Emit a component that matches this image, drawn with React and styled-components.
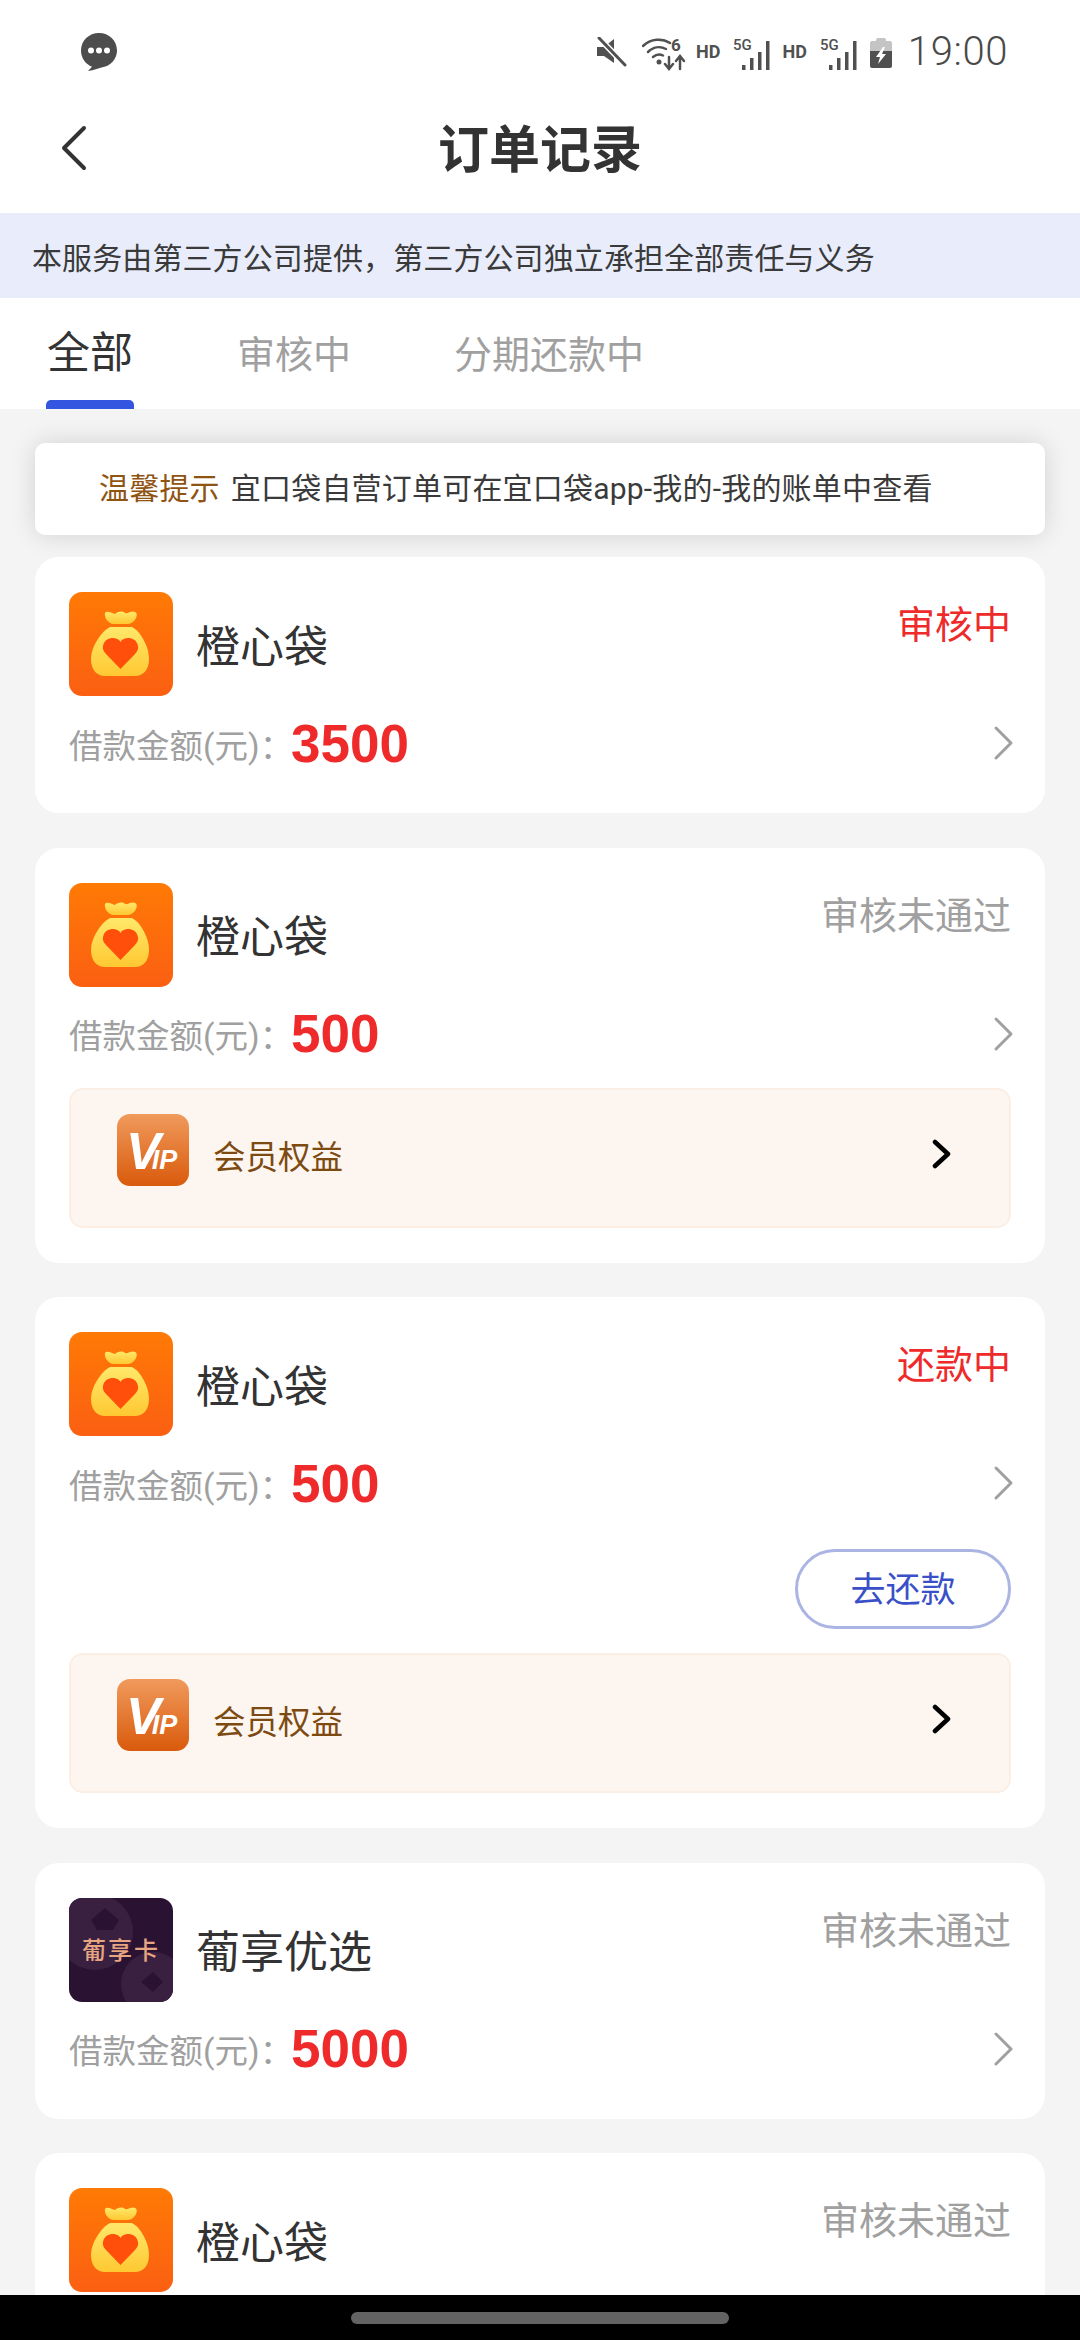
import React from 'react';
import styled, { createGlobalStyle } from 'styled-components';

const GlobalStyle = createGlobalStyle`
  html, body {
    margin: 0;
    padding: 0;
    background: #f4f4f4;
  }
  * {
    box-sizing: border-box;
  }
`

const Page = styled.div`
  width: 1080px;
  height: 2340px;
  display: flex;
  flex-direction: column;
  overflow: hidden;
  font-family: Roboto, "Noto Sans CJK SC", "Noto Sans", sans-serif;
  color: #333;
`

const StatusBar = styled.div`
  height: 100px;
  flex: none;
  display: flex;
  align-items: center;
  background: #fff;
  padding: 4px 72px 0 81px;
  color: #505050;
`

const StatusRight = styled.div`
  margin-left: auto;
  display: flex;
  align-items: center;
`

const MuteSlot = styled.div`
  display: flex;
  margin-right: 15px;
`

const BatterySlot = styled.div`
  display: flex;
  margin-left: 12px;
`

const Time = styled.span`
  font-family: Roboto, "Liberation Sans", sans-serif;
  font-weight: 300;
  font-size: 40px;
  line-height: 48px;
  letter-spacing: 0.6px;
  margin-left: 16px;
  color: #4a4a4a;
`

const TitleBar = styled.div`
  height: 113px;
  flex: none;
  background: #fff;
  display: flex;
  align-items: center;
  justify-content: center;
  position: relative;
  padding-bottom: 12px;
`

const BackButton = styled.div`
  position: absolute;
  left: 60px;
  top: 25px;
  display: flex;
`

const Title = styled.h1`
  margin: 0;
  font-size: 51px;
  line-height: 60px;
  font-weight: 700;
  color: #333;
`

const Notice = styled.div`
  height: 85px;
  flex: none;
  background: #e9edfb;
  padding-left: 32px;
  display: flex;
  align-items: center;
  font-size: 30px;
  letter-spacing: 0.1px;
  color: #3a3a3a;
`

const Tabs = styled.div`
  height: 111px;
  flex: none;
  background: #fff;
  display: flex;
  gap: 103px;
  padding-left: 46px;
`

const Tab = styled.div`
  display: flex;
  flex-direction: column;
  align-items: center;
  justify-content: space-between;
  padding-top: ${p => (p.$active ? 25 : 29)}px;
  font-size: ${p => (p.$active ? 43 : 38)}px;
  line-height: ${p => (p.$active ? 60 : 56)}px;
  color: ${p => (p.$active ? '#333' : '#a0a0a0')};
`

const TabLine = styled.div`
  width: 88px;
  height: 9px;
  border-radius: 5px 5px 0 0;
  background: #3355e0;
`

const List = styled.div`
  flex: 1;
  min-height: 0;
  overflow: hidden;
  background: #f4f4f4;
  padding: 34px 35px 0;
  display: flex;
  flex-direction: column;
`

const Tip = styled.div`
  height: 92px;
  flex: none;
  background: #fff;
  border-radius: 10px;
  box-shadow: 0 0 26px rgba(0, 0, 0, 0.14);
  display: flex;
  align-items: center;
  padding: 0 0 6px 64px;
  font-size: 30px;
  letter-spacing: 0.2px;
  color: #3a3a3a;
  margin-bottom: 22px;
`

const TipLabel = styled.span`
  color: #8f5412;
  margin-right: 11px;
`

const Card = styled.div`
  flex: none;
  display: flex;
  flex-direction: column;
  background: #fff;
  border-radius: 24px;
  padding: 35px 34px;
  margin-bottom: 34.5px;
`

const CardHead = styled.div`
  display: flex;
  height: 104px;
`

const AppIcon = styled.div`
  width: 104px;
  height: 104px;
  flex: none;
  display: flex;
  margin-right: 24px;
  position: relative;
`

const AppName = styled.div`
  align-self: center;
  font-size: 44px;
  line-height: 60px;
  padding-top: 7px;
  margin-left: -1px;
  color: #333;
`

const Status = styled.div`
  margin-left: auto;
  font-size: 38px;
  line-height: 56px;
  margin-top: 5px;
  color: ${p => (p.$alert ? '#ee2a2a' : '#a0a0a0')};
`

const AmountRow = styled.div`
  height: 60px;
  margin: 17px 0 5px;
  display: flex;
  align-items: center;
`

const AmountLabel = styled.span`
  font-size: 33.5px;
  color: #a0a0a0;
  width: 222px;
  flex: none;
  white-space: nowrap;
`

const Amount = styled.span`
  font-family: "Liberation Sans", Arial, sans-serif;
  font-weight: 700;
  font-size: 53px;
  color: #ee2a2a;
`

const RowChevron = styled.div`
  margin-left: auto;
  margin-right: -5px;
  display: flex;
`

const ButtonRow = styled.div`
  display: flex;
  justify-content: flex-end;
  margin: 31px 0 24px;
`

const RepayButton = styled.div`
  width: 216px;
  height: 80px;
  border: 3px solid #aab5e3;
  border-radius: 40px;
  display: flex;
  align-items: center;
  justify-content: center;
  padding-bottom: 5px;
  font-size: 35px;
  color: #3a50c8;
`

const Benefit = styled.div`
  height: 140px;
  margin-top: ${p => (p.$tight ? 0 : 19)}px;
  background: #fdf6f0;
  border: 2px solid #fbefe5;
  border-radius: 14px;
  display: flex;
  align-items: center;
  padding: 0 57px 8px 46px;
`

const BenefitIcon = styled.div`
  width: 72px;
  height: 72px;
  flex: none;
  display: flex;
  margin-right: 24px;
  margin-bottom: 8px;
`

const BenefitText = styled.span`
  font-size: 32.5px;
  padding-top: 1px;
  color: #7d4a12;
`

const BenefitChevron = styled.div`
  margin-left: auto;
  display: flex;
`

const BlackBar = styled.div`
  height: 45px;
  flex: none;
  background: #000;
  display: flex;
  align-items: center;
  justify-content: center;
`

const HomeIndicator = styled.div`
  width: 378px;
  height: 12px;
  border-radius: 6px;
  background: #636363;
`

const HdLabel = styled.span`
  font-family: Roboto, "Liberation Sans", sans-serif;
  font-weight: 700;
  font-size: 18px;
  line-height: 20px;
  color: #505050;
  margin: 0 ${p => p.$right}px 0 ${p => p.$left}px;
`

const PuxiangLabel = styled.span`
  position: absolute;
  left: 0;
  right: 0;
  top: 33px;
  text-align: center;
  font-family: "Noto Sans CJK SC", sans-serif;
  font-size: 24px;
  line-height: 36px;
  font-weight: 500;
  letter-spacing: 2px;
  color: #e8a582;
`

const ChatIcon = () => (
  <svg width="36" height="38" viewBox="0 0 36 38">
    <path d="M18 0C8 0 0 7.600 0 17.500c0 8 5 14 11 16.200L7 38c6-.5 10.500-3 13.500-3.500C29 33.500 36 26.500 36 17.500 36 7.600 28 0 18 0z" fill="#4d4d4d" />
    <circle cx="10" cy="17.500" r="3" fill="#fff" />
    <circle cx="18" cy="17.500" r="3" fill="#fff" />
    <circle cx="26" cy="17.500" r="3" fill="#fff" />
  </svg>
)

const MuteIcon = () => (
  <svg width="30" height="30" viewBox="0 0 30 30">
    <path d="M0 10h7l10-8v24L7 19H0z" fill="#505050" />
    <path d="M2 1l26 27" stroke="#fff" strokeWidth="6" />
    <path d="M2 1l26 27" stroke="#505050" strokeWidth="3" strokeLinecap="round" />
  </svg>
)

const WifiIcon = () => (
  <svg width="44" height="38" viewBox="0 -4 44 38">
    <g fill="none" stroke="#505050" strokeWidth="2.500" strokeLinecap="round">
      <path d="M1 9C9 1.500 20 1 28 6" />
      <path d="M6 15c5-5 12-6 18-3" />
      <path d="M11 20c3-2.500 7-3 10-1.500" />
      <path d="M27 20v11M23 27l4 5 4-5" />
      <path d="M38 32V20M34 24l4-5 4 5" />
    </g>
    <circle cx="17" cy="25" r="2.500" fill="#505050" />
    <text x="29" y="14" fontFamily="Roboto, Liberation Sans, sans-serif" fontWeight="700" fontSize="17" fill="#505050">6</text>
  </svg>
)

const SignalIcon = () => (
  <svg width="38" height="37" viewBox="0 -4 38 37">
    <text x="0" y="12" fontFamily="Roboto, Liberation Sans, sans-serif" fontWeight="500" fontSize="15" fill="#505050">5G</text>
    <g fill="#505050">
      <rect x="9" y="27" width="3.500" height="5" />
      <rect x="17" y="20" width="3.500" height="12" />
      <rect x="25" y="14" width="3.500" height="18" />
      <rect x="33" y="3" width="3.500" height="29" />
    </g>
  </svg>
)

const BatteryIcon = () => (
  <svg width="22" height="31" viewBox="0 0 22 31">
    <path d="M6 3a2 2 0 0 1 2-2h6a2 2 0 0 1 2 2v1h4a2 2 0 0 1 2 2v8H0V6a2 2 0 0 1 2-2h4z" fill="#c4c4c4" />
    <path d="M0 14h22v15a2 2 0 0 1-2 2H2a2 2 0 0 1-2-2z" fill="#505050" />
    <path d="M13 10l-7 10h4l-2 7 8-10h-4l3-7z" fill="#fff" />
  </svg>
)

const BackIcon = () => (
  <svg width="28" height="46" viewBox="0 0 28 46">
    <path d="M24 3L4 23l20 20" fill="none" stroke="#333" strokeWidth="4" strokeLinecap="round" strokeLinejoin="round" />
  </svg>
)

const GreyChevron = () => (
  <svg width="24" height="36" viewBox="0 0 24 36">
    <path d="M4 3l15 15L4 33" fill="none" stroke="#a0a0a0" strokeWidth="3" strokeLinecap="round" strokeLinejoin="round" />
  </svg>
)

const BlackChevron = () => (
  <svg width="20" height="30" viewBox="0 0 20 30">
    <path d="M3 3l13 12L3 27" fill="none" stroke="#000" strokeWidth="4.500" strokeLinecap="round" strokeLinejoin="round" />
  </svg>
)

const BagIcon = ({ id }) => (
  <svg width="104" height="104" viewBox="0 0 104 104">
    <defs>
      <linearGradient id={`bg-${id}`} x1="0" y1="0" x2="0" y2="1">
        <stop offset="0" stopColor="#ff7a05" />
        <stop offset="1" stopColor="#fb5f12" />
      </linearGradient>
      <linearGradient id={`bag-${id}`} x1="0" y1="0" x2="0" y2="1">
        <stop offset="0" stopColor="#ffe86a" />
        <stop offset="1" stopColor="#ffc832" />
      </linearGradient>
    </defs>
    <rect width="104" height="104" rx="13" fill={`url(#bg-${id})`} />
    <path d="M37 20c3-1 7 2 9 2 2-2 7-4 10-1 3 1 7-3 10-1 3 1 2 6-1 9-2 2-4 3-6 3H45c-3 0-6-2-8-5-1-3-2-6 0-7z" fill={`url(#bag-${id})`} />
    <path d="M41 35h22c8 4 17 19 17 32 0 11-6 17-14 17H36c-8 0-14-6-14-17 0-13 11-28 19-32z" fill={`url(#bag-${id})`} />
    <path d="M51.500 77L37 62c-3-3-3.500-6-3-8 1-6 6-8 10-8 3 0 6 1 7.500 4 1.500-3 4.500-4 7.500-4 4 0 9 2 10 8 .5 2 0 5-3 8z" fill="#ff4f0a" />
  </svg>
)

const PuxiangIcon = () => (
  <>
    <svg width="104" height="104" viewBox="0 0 104 104">
      <defs>
        <clipPath id="puxiang-clip">
          <rect width="104" height="104" rx="13" />
        </clipPath>
      </defs>
      <g clipPath="url(#puxiang-clip)">
        <rect width="104" height="104" fill="#2a1233" />
        <circle cx="26" cy="34" r="38" fill="#3a2040" />
        <circle cx="84" cy="86" r="32" fill="#3a2040" />
        <path d="M22 22l14-12 14 12-6 10H28z" fill="#2a1233" />
        <path d="M72 84l12-10 10 10-10 10z" fill="#2a1233" />
      </g>
    </svg>
    <PuxiangLabel>葡享卡</PuxiangLabel>
  </>
)

const VipIcon = ({ id }) => (
  <svg width="72" height="72" viewBox="0 0 72 72">
    <defs>
      <linearGradient id={`vip-${id}`} x1="0" y1="0" x2="0" y2="1">
        <stop offset="0" stopColor="#f09a5c" />
        <stop offset="1" stopColor="#d95a0c" />
      </linearGradient>
    </defs>
    <rect width="72" height="72" rx="13" fill={`url(#vip-${id})`} />
    <text x="9" y="55" fill="#fff" fontStyle="italic" fontWeight="700" fontFamily="Liberation Sans, sans-serif">
      <tspan fontSize="52">V</tspan>
      <tspan dx="-9" fontSize="27">IP</tspan>
    </text>
  </svg>
)

const NOTICE_TEXT = '本服务由第三方公司提供\uFF0C第三方公司独立承担全部责任与义务'
const AMOUNT_LABEL = '借款金额(元)\uFF1A'

// the last card runs under the nav bar, only its head is on screen
const orders = [
  { id: 1, app: 'bag', name: '橙心袋', status: '审核中', alert: true, amount: '3500' },
  { id: 2, app: 'bag', name: '橙心袋', status: '审核未通过', amount: '500', benefit: true },
  { id: 3, app: 'bag', name: '橙心袋', status: '还款中', alert: true, amount: '500', repay: true, benefit: true },
  { id: 4, app: 'puxiang', name: '葡享优选', status: '审核未通过', amount: '5000' },
  { id: 5, app: 'bag', name: '橙心袋', status: '审核未通过' },
]

const OrderCard = ({ order }) => (
  <Card>
    <CardHead>
      <AppIcon>
        {order.app === 'bag' ? <BagIcon id={order.id} /> : <PuxiangIcon />}
      </AppIcon>
      <AppName>{order.name}</AppName>
      <Status $alert={order.alert}>{order.status}</Status>
    </CardHead>
    {order.amount && (
      <AmountRow>
        <AmountLabel>{AMOUNT_LABEL}</AmountLabel>
        <Amount>{order.amount}</Amount>
        <RowChevron><GreyChevron /></RowChevron>
      </AmountRow>
    )}
    {order.repay && (
      <ButtonRow>
        <RepayButton>去还款</RepayButton>
      </ButtonRow>
    )}
    {order.benefit && (
      <Benefit $tight={order.repay}>
        <BenefitIcon><VipIcon id={order.id} /></BenefitIcon>
        <BenefitText>会员权益</BenefitText>
        <BenefitChevron><BlackChevron /></BenefitChevron>
      </Benefit>
    )}
  </Card>
)

export default function App() {
  return (
    <Page>
      <GlobalStyle />
      <StatusBar>
        <ChatIcon />
        <StatusRight>
          <MuteSlot><MuteIcon /></MuteSlot>
          <WifiIcon />
          <HdLabel $left={10} $right={13}>HD</HdLabel>
          <SignalIcon />
          <HdLabel $left={11} $right={13}>HD</HdLabel>
          <SignalIcon />
          <BatterySlot><BatteryIcon /></BatterySlot>
          <Time>19:00</Time>
        </StatusRight>
      </StatusBar>
      <TitleBar>
        <BackButton><BackIcon /></BackButton>
        <Title>订单记录</Title>
      </TitleBar>
      <Notice>{NOTICE_TEXT}</Notice>
      <Tabs>
        <Tab $active>
          全部
          <TabLine />
        </Tab>
        <Tab>审核中</Tab>
        <Tab>分期还款中</Tab>
      </Tabs>
      <List>
        <Tip>
          <TipLabel>温馨提示</TipLabel>
          宜口袋自营订单可在宜口袋app-我的-我的账单中查看
        </Tip>
        {orders.map(order => <OrderCard key={order.id} order={order} />)}
      </List>
      <BlackBar>
        <HomeIndicator />
      </BlackBar>
    </Page>
  );
}
